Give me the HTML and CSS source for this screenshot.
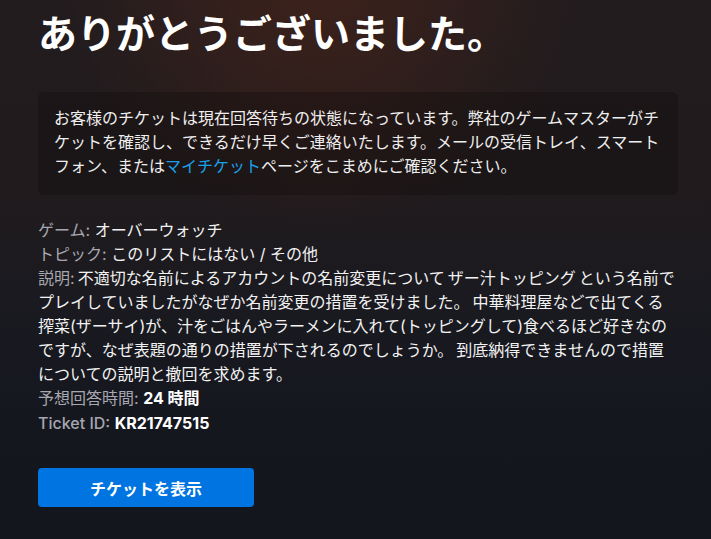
FILE: index.html
```html
<!DOCTYPE html>
<html lang="ja">
<head>
<meta charset="utf-8">
<title>ありがとうございました。</title>
<link rel="stylesheet" href="styles.css">
</head>
<body>
<main class="page">
  <h1 class="title">ありがとうございました。</h1>
  <div class="notice">
    お客様のチケットは現在回答待ちの状態になっています。弊社のゲームマスターがチケットを確認し、できるだけ早くご連絡いたします。メールの受信トレイ、スマートフォン、または<a class="link" href="#">マイチケット</a>ページをこまめにご確認ください。
  </div>
  <div class="details">
    <div class="row"><span class="label">ゲーム:</span> オーバーウォッチ</div>
    <div class="row"><span class="label">トピック:</span> このリストにはない / その他</div>
    <div class="row desc"><span class="label">説明:</span> 不適切な名前によるアカウントの名前変更について ザー汁トッピング という名前でプレイしていましたがなぜか名前変更の措置を受けました。 中華料理屋などで出てくる搾菜(ザーサイ)が、汁をごはんやラーメンに入れて(トッピングして)食べるほど好きなのですが、なぜ表題の通りの措置が下されるのでしょうか。 到底納得できませんので措置についての説明と撤回を求めます。</div>
    <div class="row meta"><span class="label">予想回答時間:</span> <strong>24 時間</strong></div>
    <div class="row meta"><span class="label label-strong">Ticket ID:</span> <strong>KR21747515</strong></div>
  </div>
  <a class="button" href="#">チケットを表示</a>
</main>
</body>
</html>
```

FILE: styles.css
```css
html, body {
  margin: 0;
  padding: 0;
}

body {
  min-height: 539px;
  color: #f2f2f2;
  font-family: "Inter", "Noto Sans CJK JP", sans-serif;
  background-color: #15171f;
  background-image:
    radial-gradient(ellipse 250px 250px at 320px -20px, rgba(68, 35, 26, 0.8), rgba(68, 35, 26, 0) 100%),
    linear-gradient(180deg, #231c1e 0px, #211b1d 180px, #1a1a20 300px, #15171f 420px, #14161e 539px);
}

.page {
  width: 640px;
  padding: 10px 0 0 38px;
}

.title {
  margin: 0;
  font-size: 39px;
  line-height: 48px;
  font-weight: 700;
  color: #ffffff;
}

.notice {
  margin-top: 34px;
  padding: 14px 16px 17px;
  background: rgba(10, 8, 8, 0.28);
  border-radius: 6px;
  font-size: 16px;
  line-height: 24px;
  color: #eeeeee;
}

.link {
  color: #19a0e8;
  text-decoration: none;
}

.details {
  margin-top: 23px;
  font-size: 16px;
  line-height: 24px;
  color: #f2f2f2;
}

.desc {
  word-spacing: -1.5px;
}

.label {
  color: #a7a7af;
}

.label-strong {
  font-weight: 500;
}

.meta {
  line-height: 25px;
}

.meta strong {
  font-weight: 700;
  color: #ffffff;
}

.button {
  display: flex;
  align-items: center;
  justify-content: center;
  width: 216px;
  height: 39px;
  margin-top: 32px;
  background: #0074e0;
  border-radius: 4px;
  color: #ffffff;
  font-size: 16px;
  font-weight: 700;
  text-decoration: none;
}
```
